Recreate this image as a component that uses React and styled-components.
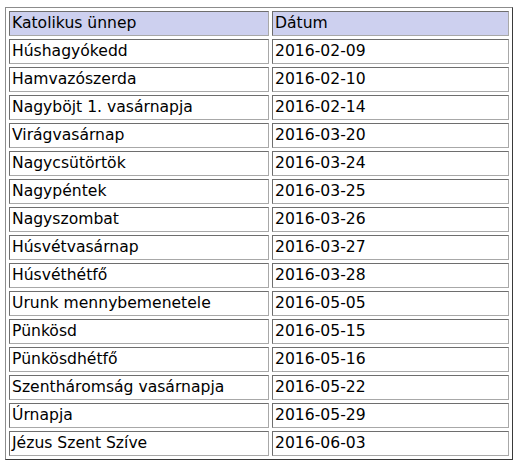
import styled, { createGlobalStyle } from "styled-components";

const GlobalStyle = createGlobalStyle`
  body {
    margin: 0;
    background: #ffffff;
  }
`;

const holidays = [
  ["Húshagyókedd", "2016-02-09"],
  ["Hamvazószerda", "2016-02-10"],
  ["Nagyböjt 1. vasárnapja", "2016-02-14"],
  ["Virágvasárnap", "2016-03-20"],
  ["Nagycsütörtök", "2016-03-24"],
  ["Nagypéntek", "2016-03-25"],
  ["Nagyszombat", "2016-03-26"],
  ["Húsvétvasárnap", "2016-03-27"],
  ["Húsvéthétfő", "2016-03-28"],
  ["Urunk mennybemenetele", "2016-05-05"],
  ["Pünkösd", "2016-05-15"],
  ["Pünkösdhétfő", "2016-05-16"],
  ["Szentháromság vasárnapja", "2016-05-22"],
  ["Úrnapja", "2016-05-29"],
  ["Jézus Szent Szíve", "2016-06-03"],
];

const StyledPage = styled.div`
  padding: 7px 0 0 5px;
  font-family: "DejaVu Sans", Verdana, sans-serif;
`;

const StyledTable = styled.table`
  width: 508px;
  border-collapse: separate;
  border-spacing: 3px;
  border: 1px solid;
  border-color: #8c8c8c #3a3a3a #3a3a3a #8c8c8c;
  table-layout: fixed;
`;

const StyledCell = styled.td`
  width: ${(p) => p.w}px;
  box-sizing: border-box;
  height: 25px;
  padding: 1px 2px;
  border: 1px solid;
  border-color: #6e6e6e #a8a8a8 #a8a8a8 #6e6e6e;
  font-size: 15.6px;
  line-height: 21px;
  color: #000;
  text-align: left;
  font-weight: 400;
  white-space: nowrap;
  background: ${(p) => (p.head ? "#cdd0ef" : "#ffffff")};
  vertical-align: middle;
`;

export default function App() {
  return (
    <StyledPage>
      <GlobalStyle />
      <StyledTable>
        <tbody>
          <tr>
            <StyledCell as="th" head w={260}>
              Katolikus ünnep
            </StyledCell>
            <StyledCell as="th" head w={237}>
              Dátum
            </StyledCell>
          </tr>
          {holidays.map(([name, date]) => (
            <tr key={name}>
              <StyledCell w={260}>{name}</StyledCell>
              <StyledCell w={237}>{date}</StyledCell>
            </tr>
          ))}
        </tbody>
      </StyledTable>
    </StyledPage>
  );
}
